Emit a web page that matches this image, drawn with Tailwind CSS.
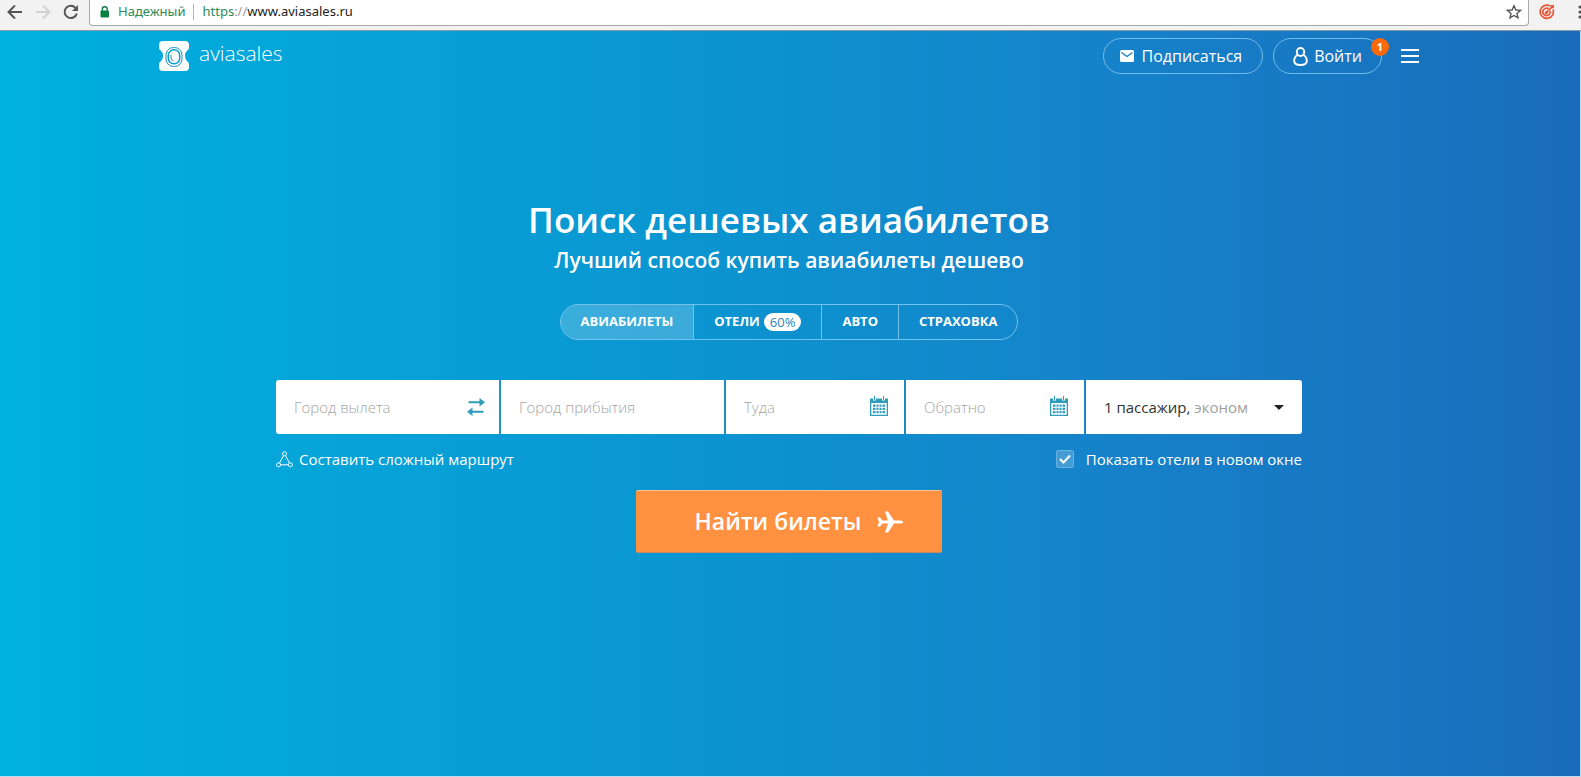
<!DOCTYPE html>
<html lang="ru">
<head>
<meta charset="utf-8">
<title>Aviasales</title>
<script src="https://cdn.jsdelivr.net/npm/@tailwindcss/browser@4"></script>
</head>
<body class="min-h-screen flex flex-col bg-[#bcdcf2] pb-px font-['Open_Sans','Noto_Sans',sans-serif] text-white">

<!-- Browser toolbar -->
<div class="flex h-[31px] shrink-0 items-start overflow-hidden border-b border-[#8a9aa5] bg-[#f2f2f2] pl-[7px]">
  <div class="flex h-6 items-center gap-3 w-[82px] shrink-0">
    <button type="button" aria-label="Назад"><svg class="size-4" viewBox="0 0 16 16" fill="none" stroke="#555" stroke-width="2"><path d="M15 8H2M8 1.500L1.500 8L8 14.500"/></svg></button>
    <button type="button" aria-label="Вперёд"><svg class="size-4" viewBox="0 0 16 16" fill="none" stroke="#d2d2d2" stroke-width="2"><path d="M1 8H14M8 1.500L14.500 8L8 14.500"/></svg></button>
    <button type="button" aria-label="Обновить"><svg class="size-4" viewBox="0 0 16 16" fill="none"><path d="M13.800 9.500A6.200 6.200 0 1 1 12.500 3.800" stroke="#555" stroke-width="2"/><path d="M15 1V7H9Z" fill="#555"/></svg></button>
  </div>
  <div class="flex h-[26px] flex-1 items-center rounded-b-sm border border-t-0 border-[#a9a9a9] bg-white pr-1.5 pl-2.5 pb-px text-[13px] font-['Noto_Sans','Open_Sans',sans-serif]">
    <svg class="h-3 w-2.5 shrink-0" viewBox="0 0 10 12"><rect x="0.500" y="4.500" width="8.500" height="7" rx="1" fill="#0b8043"/><path d="M2.300 5V3.200a2.450 2.450 0 0 1 4.900 0V5" fill="none" stroke="#0b8043" stroke-width="1.400"/></svg>
    <span class="ml-2 text-[#2c8a55]">Надежный</span>
    <span class="mx-2 h-4 w-px bg-[#b5b5b5]"></span>
    <span class="text-[#2c8a55]">https</span><span class="text-[#999]">://</span><input type="text" aria-label="Адрес" value="www.aviasales.ru" class="min-w-0 flex-1 text-[#222] outline-none">
    <button type="button" aria-label="В закладки"><svg class="size-4" viewBox="0 0 16 16" fill="none" stroke="#555" stroke-width="1.400"><path d="M8 1.800L9.900 6L14.400 6.400L11 9.400L12 13.900L8 11.500L4 13.900L5 9.400L1.600 6.400L6.100 6Z"/></svg></button>
  </div>
  <div class="flex h-6 w-[52px] shrink-0 items-center justify-between overflow-hidden pl-2.5">
    <button type="button" aria-label="Расширение"><svg class="size-4" viewBox="0 0 16 16" fill="none" stroke="#e8573a" stroke-width="1.700"><path d="M11.200 2.100A6.600 6.600 0 1 0 14 5.500"/><path d="M9.500 4.800A3.700 3.700 0 1 0 11.100 7"/><path d="M7.300 8.700L14.800 1.200M12.500 1V3.500H15"/><circle cx="7.300" cy="8.700" r="0.800"/></svg></button>
    <button type="button" aria-label="Меню браузера" class="-mr-px"><svg class="h-4 w-1" viewBox="0 0 4 16" fill="#555"><circle cx="2" cy="3" r="1.600"/><circle cx="2" cy="8" r="1.600"/><circle cx="2" cy="13" r="1.600"/></svg></button>
  </div>
</div>

<div class="mr-px flex flex-1 flex-col bg-linear-[90deg,#00b1e0,#0b94d0_45%,#1584ca_68%,#1a6cbb] pr-0.5">
  <header class="mx-auto flex w-full max-w-[1260px] items-center pt-[7px]">
    <a href="#" class="flex items-center gap-2.5 text-[21px] leading-6 font-light">
      <svg class="size-[30px]" viewBox="0 0 30 30"><path d="M4 0H26Q30 0 30 4V7Q30 8.500 28.500 9.300Q26 11 26 15T28.500 20.700Q30 21.500 30 23V26Q30 30 26 30H4Q0 30 0 26V23Q0 21.500 1.500 20.700Q4 19 4 15T1.500 9.300Q0 8.500 0 7V4Q0 0 4 0Z" fill="#fff"/><rect x="7" y="6.500" width="16" height="19" rx="7.500" fill="none" stroke="#168fbd" stroke-width="1"/><rect x="9.300" y="8.800" width="11.400" height="14" rx="5.500" fill="none" stroke="#079dcc" stroke-width="1.500"/><path d="M12 14V17Q12.200 19.300 14.500 20" fill="none" stroke="#168fbd" stroke-width="1"/></svg>
      <span class="pb-1.5">aviasales</span>
    </a>
    <div class="ml-auto flex items-center">
      <button type="button" class="flex h-9 items-center gap-2 rounded-full border border-[#72bdeb] pr-5 pl-4 text-[16px]">
        <svg class="h-3 w-3.5" viewBox="0 0 14 12"><rect width="14" height="12" rx="1.500" fill="#fff"/><path d="M1.500 2.500L7 6.500L12.500 2.500" fill="none" stroke="#177bc3" stroke-width="1.400"/></svg>
        Подписаться
      </button>
      <button type="button" class="relative ml-2.5 flex h-9 items-center gap-1.5 rounded-full border border-[#72bdeb] px-[19px] text-[16px]">
        <svg class="h-[19px] w-[15px]" viewBox="0 0 15 19" fill="none" stroke="#fff" stroke-width="1.900"><ellipse cx="7.500" cy="5" rx="3.700" ry="4"/><path d="M4.700 8C2.500 9 1.200 11.500 1.200 14C1.200 17 4 18 7.500 18S13.800 17 13.800 14C13.800 11.500 12.500 9 10.300 8"/></svg>
        Войти
        <span class="absolute -top-px -right-2 size-[18px] rounded-full bg-[#fb6a06] text-center text-[11px] leading-[18px] font-bold">1</span>
      </button>
      <button type="button" aria-label="Меню" class="ml-[19px] flex w-[18px] flex-col gap-1"><span class="h-0.5 bg-white"></span><span class="h-0.5 bg-white"></span><span class="h-0.5 bg-white"></span></button>
    </div>
  </header>

  <main class="mx-auto w-full max-w-[1026px] pt-[122px]">
    <h1 class="text-center text-[35px] leading-[48px] font-semibold">Поиск дешевых авиабилетов</h1>
    <p class="text-center text-[21px] leading-8 font-semibold">Лучший способ купить авиабилеты дешево</p>

    <nav class="mx-auto mt-7 flex h-9 w-fit overflow-hidden rounded-full border border-[#72c3ec] text-[13px] font-bold">
      <a href="#" class="flex items-center bg-white/20 px-5">АВИАБИЛЕТЫ</a>
      <a href="#" class="flex items-center gap-1 border-l border-[#72c3ec] px-5">ОТЕЛИ <span class="rounded-full bg-white px-1.5 leading-[18px] font-normal text-[#2a83b8]">60%</span></a>
      <a href="#" class="flex items-center border-l border-[#72c3ec] px-5">АВТО</a>
      <a href="#" class="flex items-center border-l border-[#72c3ec] px-5">СТРАХОВКА</a>
    </nav>

    <form class="mt-10">
      <div class="grid grid-cols-[minmax(0,223fr)_minmax(0,223fr)_minmax(0,178fr)_minmax(0,178fr)_minmax(0,216fr)] grid-rows-[54px] gap-0.5 overflow-hidden rounded-[3px] bg-linear-to-r from-[#2695bb] to-[#1f80bd] text-[15px] font-light text-[#333]">
        <div class="flex items-center bg-white pr-3.5 pl-[18px]">
          <input type="text" aria-label="Город вылета" placeholder="Город вылета" class="min-w-0 flex-1 outline-none placeholder:text-[#a5a5a5]">
          <button type="button" aria-label="Поменять города местами"><svg class="h-[18px] w-[18px]" viewBox="0 0 18 18" fill="#2f9cba"><path d="M1.500 3.200H12.500V0L18 4.200L12.500 8.400V5.200H1.500ZM16.500 12.800H5.500V9.600L0 13.800L5.500 18V14.800H16.500Z"/></svg></button>
        </div>
        <div class="flex items-center bg-white px-[18px]">
          <input type="text" aria-label="Город прибытия" placeholder="Город прибытия" class="min-w-0 flex-1 outline-none placeholder:text-[#a5a5a5]">
        </div>
        <div class="flex items-center bg-white pr-4 pl-[18px]">
          <input type="text" aria-label="Туда" placeholder="Туда" class="min-w-0 flex-1 outline-none placeholder:text-[#a5a5a5]">
          <svg class="mb-0.5 h-5 w-[18px] shrink-0" viewBox="0 0 18 20"><path d="M0 2.500H18V20H0Z" fill="#2f9cba"/><path d="M1.300 7H16.700V18.700H1.300Z" fill="#fff"/><path d="M3 0H6V4.500H3ZM12 0H15V4.500H12Z" fill="#fff"/><path d="M4 0H5V4H4ZM13 0H14V4H13ZM3 8.500H5.500V10.800H3ZM6.500 8.500H8.500V10.800H6.500ZM9.500 8.500H11.500V10.800H9.500ZM12.500 8.500H15V10.800H12.500ZM3 11.800H5.500V14H3ZM6.500 11.800H8.500V14H6.500ZM9.500 11.800H11.500V14H9.500ZM12.500 11.800H15V14H12.500ZM3 15H5.500V17.200H3ZM6.500 15H8.500V17.200H6.500ZM9.500 15H11.500V17.200H9.500ZM12.500 15H15V17.200H12.500Z" fill="#2f9cba"/></svg>
        </div>
        <div class="flex items-center bg-white pr-4 pl-[18px]">
          <input type="text" aria-label="Обратно" placeholder="Обратно" class="min-w-0 flex-1 outline-none placeholder:text-[#a5a5a5]">
          <svg class="mb-0.5 h-5 w-[18px] shrink-0" viewBox="0 0 18 20"><path d="M0 2.500H18V20H0Z" fill="#2f9cba"/><path d="M1.300 7H16.700V18.700H1.300Z" fill="#fff"/><path d="M3 0H6V4.500H3ZM12 0H15V4.500H12Z" fill="#fff"/><path d="M4 0H5V4H4ZM13 0H14V4H13ZM3 8.500H5.500V10.800H3ZM6.500 8.500H8.500V10.800H6.500ZM9.500 8.500H11.500V10.800H9.500ZM12.500 8.500H15V10.800H12.500ZM3 11.800H5.500V14H3ZM6.500 11.800H8.500V14H6.500ZM9.500 11.800H11.500V14H9.500ZM12.500 11.800H15V14H12.500ZM3 15H5.500V17.200H3ZM6.500 15H8.500V17.200H6.500ZM9.500 15H11.500V17.200H9.500ZM12.500 15H15V17.200H12.500Z" fill="#2f9cba"/></svg>
        </div>
        <button type="button" aria-haspopup="listbox" class="flex items-center bg-white px-[18px] font-normal">
          <span>1 пассажир, <span class="text-[#a0a0a0]">эконом</span></span>
          <svg class="ml-auto h-[5px] w-2.5" viewBox="0 0 10 5" fill="#222"><path d="M0 0H10L5 5Z"/></svg>
        </button>
      </div>

      <div class="mt-[15px] flex items-center justify-between text-[15px] leading-5">
        <a href="#" class="flex items-center gap-1.5">
          <svg class="h-[17px] w-[17px]" viewBox="0 0 17 17" fill="none" stroke="#fff" stroke-width="1"><circle cx="8.500" cy="2.800" r="2"/><circle cx="2.600" cy="13.800" r="2"/><circle cx="14.400" cy="13.800" r="2"/><path d="M7.500 4.600L3.500 12M9.500 4.600L13.500 12M4.600 13.800H12.400"/></svg>
          Составить сложный маршрут
        </a>
        <label class="flex items-center gap-3" for="hotels">
          <span class="grid size-[18px]">
            <input id="hotels" type="checkbox" checked class="col-start-1 row-start-1 size-[18px] appearance-none rounded-xs border border-[#68afe2] bg-white/20">
            <svg class="pointer-events-none col-start-1 row-start-1 size-[18px]" viewBox="0 0 18 18" fill="none" stroke="#fff" stroke-width="2"><path d="M4 9L7.500 12.500L14 5.500"/></svg>
          </span>
          Показать отели в новом окне
        </label>
      </div>

      <button type="submit" class="mx-auto mt-[21px] flex h-[63px] w-[306px] items-center justify-center gap-4 rounded-xs border-t border-b border-t-[#ffc08f] border-b-[#c98560] bg-[#ff9140] pl-5 text-[23px] font-semibold">
        Найти билеты
        <svg class="h-[22px] w-[26px]" viewBox="0 0 26 22" fill="#fff"><path d="M26 11Q26 12.500 23 12.500H17L11 21.500H8L11 12.500H5.500L3 15.500H0.500L2 11L0.500 6.500H3L5.500 9.500H11L8 0.500H11L17 9.500H23Q26 9.500 26 11Z"/></svg>
      </button>
    </form>
  </main>
</div>
</body>
</html>
